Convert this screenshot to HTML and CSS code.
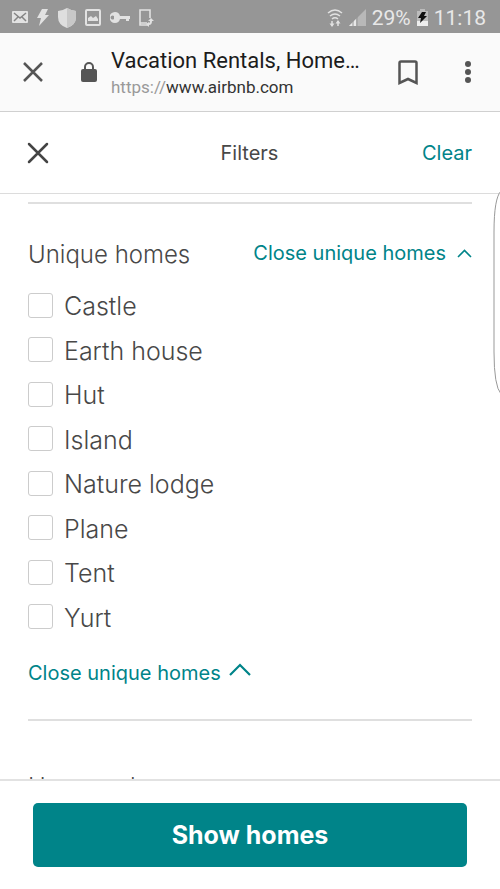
FILE: index.html
```html
<!DOCTYPE html>
<html lang="en">
<head>
<meta charset="utf-8">
<meta name="viewport" content="width=device-width, initial-scale=1">
<title>Filters</title>
<link rel="stylesheet" href="styles.css">
</head>
<body>
<div class="status">
  <div class="status-icons">
    <svg width="16" height="13" viewBox="0 0 16 13"><rect width="16" height="12" rx="1" fill="#e2e2e2"/><path d="M2 2l6 5 6-5M2 10l4-4M14 10l-4-4" fill="none" stroke="#858585" stroke-width="1.5"/></svg>
    <svg width="12" height="17" viewBox="0 0 12 17"><path d="M5 0h6L8 6h4L2 17l2-8H0z" fill="#e2e2e2"/></svg>
    <svg width="18" height="20" viewBox="0 0 18 20"><path d="M9 0q5 3 9 3v6q0 8-9 11Q0 17 0 9V3q4 0 9-3z" fill="#dedede"/><path d="M9 0q5 3 9 3v6q0 8-9 11z" fill="#c8c8c8"/></svg>
    <svg width="16" height="17" viewBox="0 0 16 17"><rect x="1" y="1" width="14" height="15" rx="1" fill="none" stroke="#e2e2e2" stroke-width="2"/><path d="M3 12V9l3-2 2 2 3-2 2 3v2z" fill="#e2e2e2"/></svg>
    <svg width="20" height="11" viewBox="0 0 20 11"><path fill-rule="evenodd" d="M5 0q4 0 5 4h10v3h-1v2h-3V7h-6q-1 4-5 4a5 5 0 0 1 0-11zM4 4a2 2 0 1 0 0 3z" fill="#e2e2e2"/></svg>
    <svg width="15" height="18" viewBox="0 0 15 18"><path d="M11 9V1H1v15h8M1 14h7" fill="none" stroke="#e2e2e2" stroke-width="1.6"/><path d="M12 9l3 3h-2q0 4-3 4v2l-3-3 3-2v1q1 0 1-2H9z" fill="#e2e2e2"/></svg>
  </div>
  <div class="status-info">
    <svg width="16" height="18" viewBox="0 0 16 18"><g fill="none" stroke="#e2e2e2" stroke-width="1.5"><path d="M1 4q7-6 14 0M3 7q5-4 10 0M5 10q3-2.500 6 0M5 12v5M11 17v-5"/></g><path d="M2.500 14.500h5L5 18zM8.500 14.500h5L11 11z" fill="#e2e2e2"/></svg>
    <svg width="17" height="17" viewBox="0 0 17 17"><path d="M17 0v17H0z" fill="#b8b8b8"/><path d="M7 10v7H0z" fill="#e8e8e8"/><path d="M4 11v6M8 7v10" stroke="#969696"/></svg>
    <span class="battery-text">29%</span>
    <svg width="11" height="17" viewBox="0 0 11 17"><path d="M3 0h5v2h3v15H0V2h3z" fill="#bcbcbc"/><path d="M0 12h11v5H0z" fill="#eee"/><path d="M5 3h4L7 7h3l-7 7 1-5H1z" fill="#111"/></svg>
    <span class="clock">11:18</span>
  </div>
</div>
<div class="browser-bar">
  <button class="icon-button" aria-label="Close tab"><svg width="20" height="20" viewBox="0 0 20 20"><path d="M1 1l18 18M19 1L1 19" stroke="#555" stroke-width="2.500"/></svg></button>
  <svg class="lock" width="16" height="20" viewBox="0 0 16 20"><rect y="7" width="16" height="13" rx="2" fill="#555"/><path d="M4 8V5a4 4 0 0 1 8 0v3" fill="none" stroke="#555" stroke-width="2"/></svg>
  <div class="address">
    <div class="page-title">Vacation Rentals, Home…</div>
    <div class="url"><span class="scheme">https://</span>www.airbnb.com</div>
  </div>
  <button class="icon-button" aria-label="Bookmark"><svg width="20" height="25" viewBox="0 0 20 25"><path d="M1.500 23V3q0-1.500 1.500-1.500h14q1.500 0 1.500 1.500v20L10 19z" fill="none" stroke="#555" stroke-width="2.500"/></svg></button>
  <button class="icon-button more" aria-label="More options"><svg width="6" height="24" viewBox="0 0 6 24"><g fill="#555"><circle cx="3" cy="4" r="3"/><circle cx="3" cy="12" r="3"/><circle cx="3" cy="20" r="3"/></g></svg></button>
</div>
<header class="filter-bar">
  <button class="icon-button close" aria-label="Close filters"><svg width="22" height="22" viewBox="0 0 22 22"><path d="M2 2l18 18M20 2L2 20" stroke="#444" stroke-width="2.500" stroke-linecap="round"/></svg></button>
  <h1>Filters</h1>
  <button class="link-button clear">Clear</button>
</header>
<main class="content">
  <section class="section">
    <div class="section-head">
      <h2>Unique homes</h2>
      <button class="link-button">Close unique homes <svg width="15" height="9" viewBox="0 0 15 9"><path d="M1 8l6.500-6.500L14 8" fill="none" stroke="#008489" stroke-width="1.600"/></svg></button>
    </div>
    <div class="options">
      <label class="option"><input type="checkbox"><span>Castle</span></label>
      <label class="option"><input type="checkbox"><span>Earth house</span></label>
      <label class="option"><input type="checkbox"><span>Hut</span></label>
      <label class="option"><input type="checkbox"><span>Island</span></label>
      <label class="option"><input type="checkbox"><span>Nature lodge</span></label>
      <label class="option"><input type="checkbox"><span>Plane</span></label>
      <label class="option"><input type="checkbox"><span>Tent</span></label>
      <label class="option"><input type="checkbox"><span>Yurt</span></label>
    </div>
    <button class="link-button collapse">Close unique homes <svg width="22" height="20" viewBox="0 0 22 20"><path d="M1 12L11 2l10 10" fill="none" stroke="#008489" stroke-width="2.200"/></svg></button>
  </section>
  <section class="section next">
    <h2>House rules</h2>
  </section>
</main>
<footer class="footer"><button class="submit">Show homes</button></footer>
<svg class="edge-handle" width="7" height="206" viewBox="0 0 7 206"><path d="M8 1Q1 8 1 42v120q0 34 7 42" fill="#fff" stroke="#999"/></svg>
</body>
</html>
```

FILE: styles.css
```css
* { box-sizing: border-box; }

body {
  margin: 0;
  height: 100vh;
  display: flex;
  flex-direction: column;
  position: relative;
  overflow: hidden;
  background: #fff;
  color: #484848;
  font-family: Inter, "Liberation Sans", sans-serif;
}

svg { display: block; flex: none; }
h1, h2 { margin: 0; }
button { padding: 0; border: 0; background: none; font: inherit; cursor: pointer; }

.status {
  display: flex;
  flex: none;
  justify-content: space-between;
  align-items: center;
  height: 33px;
  padding: 2px 14px 0 12px;
  background: #969696;
  color: #e8e8e8;
  font: 21px/24px Roboto, sans-serif;
}
.status-icons { display: flex; align-items: center; gap: 9px; }
.status-info { display: flex; align-items: center; gap: 6px; }

.browser-bar {
  display: flex;
  flex: none;
  align-items: center;
  height: 79px;
  padding: 0 29px 0 23px;
  background: #fafafa;
  border-bottom: 1px solid #d0d0d0;
  font-family: Roboto, sans-serif;
}
.lock { margin: 0 14px 0 38px; }
.address { flex: 1; min-width: 0; margin-right: 32px; padding-top: 2px; }
.page-title {
  overflow: hidden;
  white-space: nowrap;
  text-overflow: ellipsis;
  font-size: 22px;
  line-height: 28px;
  color: #1c1c1c;
}
.url { font-size: 17px; line-height: 24px; color: #333; }
.scheme { color: #999; }
.more { margin-left: 47px; }

.filter-bar {
  display: grid;
  flex: none;
  grid-template-columns: 1fr auto 1fr;
  align-items: center;
  height: 82px;
  padding: 0 28px 0 27px;
  border-bottom: 1px solid #dcdcdc;
}
.filter-bar h1 { font-size: 20px; line-height: 24px; font-weight: 400; }
.close { justify-self: start; }
.clear { justify-self: end; }

.link-button {
  display: flex;
  align-items: center;
  gap: 11px;
  color: #008489;
  font-size: 20px;
  line-height: 28px;
}
.collapse { gap: 8px; }

.content { flex: 1; min-height: 0; overflow: hidden; padding: 8px 28px 0; }
.section { border-top: 2px solid #dfdfdf; padding-top: 35px; }
.section h2 { font-size: 24px; line-height: 32px; font-weight: 300; }
.section-head { display: flex; justify-content: space-between; align-items: flex-start; }

.options {
  display: grid;
  grid-auto-rows: 1fr;
  min-height: 356px;
  margin: 12px 0 20px;
}
.option {
  display: flex;
  align-items: center;
  gap: 11px;
  font-size: 25px;
  line-height: 32px;
  font-weight: 300;
}
.option span { padding-top: 2px; }
.option input {
  appearance: none;
  width: 25px;
  height: 25px;
  margin: 0;
  background: #fff;
  border: 1px solid #ccc;
  border-radius: 3px;
}
.option input:checked { background: #008489; }

.next { margin-top: 32px; padding-top: 50px; }

.footer {
  flex: none;
  padding: 22px 33px;
  background: #fff;
  border-top: 2px solid #e2e2e2;
}
.submit {
  width: 100%;
  padding: 16px;
  border-radius: 5px;
  background: #008489;
  color: #fff;
  font-size: 25px;
  line-height: 32px;
  font-weight: 700;
}

.edge-handle { position: absolute; top: 190px; right: 0; }
```
